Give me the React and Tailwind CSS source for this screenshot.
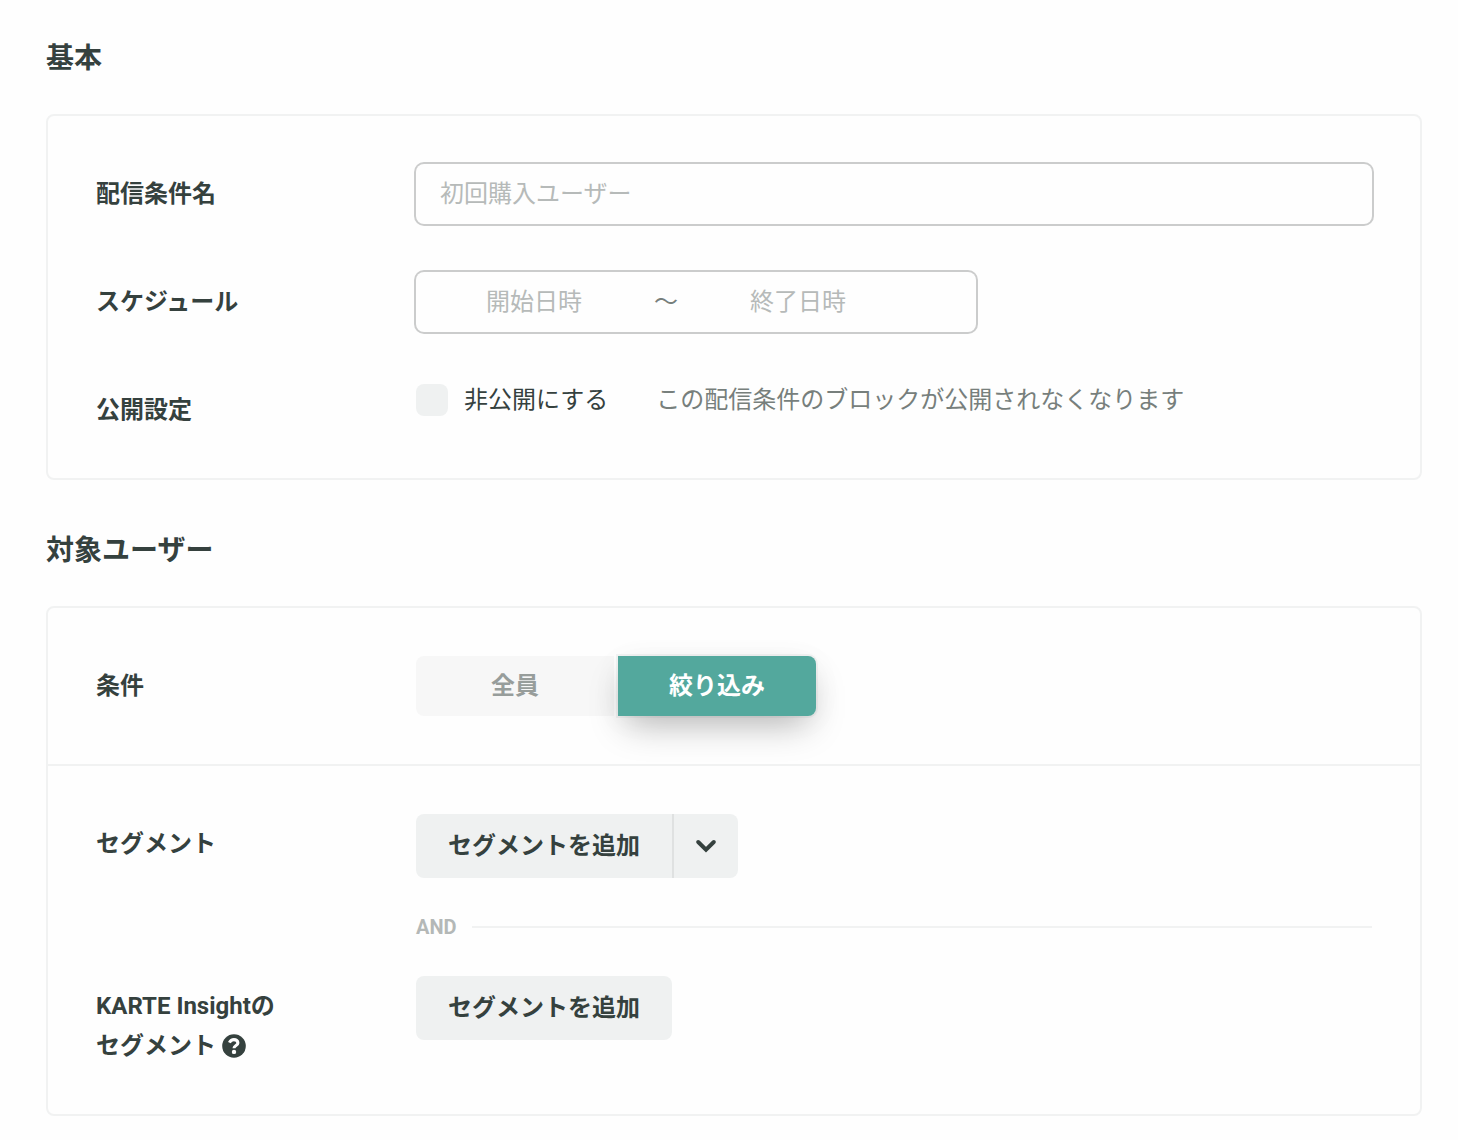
import { useState } from 'react';

const SectionTitle = ({ children }) => (
  <h2 className="mb-8 text-[28px] leading-[46px] font-bold">{children}</h2>
);

const Row = ({ label, htmlFor, children }) => (
  <div className="flex items-start">
    {htmlFor ? (
      <label htmlFor={htmlFor} className="w-80 shrink-0 py-2.5 leading-10 font-bold">
        {label}
      </label>
    ) : (
      <div className="w-80 shrink-0 py-2.5 leading-10 font-bold">{label}</div>
    )}
    <div className="min-w-0 flex-1">{children}</div>
  </div>
);

const AddSegmentButton = ({ className = '' }) => (
  <button type="button" className={`h-16 bg-[#eff1f1] px-8 font-bold ${className}`}>
    セグメントを追加
  </button>
);

const ChevronDown = () => (
  <svg width="24" height="24" viewBox="0 0 24 24" fill="none" aria-hidden="true">
    <path d="M4.2 8L12 15.6L19.8 8" stroke="currentColor" strokeWidth="4" strokeLinecap="round" />
  </svg>
);

const HelpIcon = () => (
  <svg width="24" height="24" viewBox="0 0 24 24" fill="none" aria-hidden="true">
    <circle cx="12" cy="12" r="11.8" fill="currentColor" />
    <path
      d="M7.4 8.6C8.4 6.6 9.9 5.6 11.9 5.6C14.2 5.6 15.9 7 15.9 9C15.9 11.6 12 11.4 12 14.2"
      stroke="#fefefe"
      strokeWidth="3.1"
    />
    <circle cx="12" cy="17.9" r="2.2" fill="#fefefe" />
  </svg>
);

const TargetToggle = ({ value, onChange }) => {
  const active =
    'relative bg-[#53a89d] text-white shadow-[0_0_0_2px_rgba(40,60,55,0.05),0_16px_36px_-8px_rgba(0,0,0,0.28),0_4px_32px_rgba(0,0,0,0.04)]';
  const inactive = 'bg-[#f7f7f7] text-[#979d9b]';

  return (
    <div className="flex gap-1">
      <button
        type="button"
        aria-pressed={value === 'all'}
        onClick={() => onChange('all')}
        className={`h-[60px] w-[198px] rounded-l-lg font-bold ${value === 'all' ? active : inactive}`}
      >
        全員
      </button>
      <button
        type="button"
        aria-pressed={value === 'filter'}
        onClick={() => onChange('filter')}
        className={`h-[60px] w-[198px] rounded-r-lg font-bold ${value === 'filter' ? active : inactive}`}
      >
        絞り込み
      </button>
    </div>
  );
};

const App = () => {
  const [target, setTarget] = useState('filter');
  const [isPrivate, setIsPrivate] = useState(false);

  return (
    <main
      lang="ja"
      className="min-h-screen bg-[#fefefe] pt-9 pr-9 pb-6 pl-[46px] font-['Roboto','Noto_Sans_CJK_JP',sans-serif] text-2xl text-[#35413e]"
    >
      {/* 基本 */}
      <section>
        <SectionTitle>基本</SectionTitle>
        <div className="flex flex-col gap-12 rounded-lg border-2 border-[#f1f2f2] px-12 pt-12 pb-[38px]">
          <Row label="配信条件名" htmlFor="name">
            <input
              id="name"
              type="text"
              placeholder="初回購入ユーザー"
              className="block h-[60px] w-full rounded-lg px-6 ring-2 ring-[#cbcccc] outline-none placeholder:text-[#b6bab9]"
            />
          </Row>

          <Row label="スケジュール" htmlFor="start">
            <div className="flex h-[60px] w-[560px] items-center rounded-lg ring-2 ring-[#cbcccc]">
              <input
                id="start"
                type="text"
                placeholder="開始日時"
                className="h-full w-[236px] text-center outline-none placeholder:text-[#b6bab9]"
              />
              <span className="w-7 text-center text-[#777f7c]">〜</span>
              <input
                type="text"
                aria-label="終了日時"
                placeholder="終了日時"
                className="h-full w-[236px] text-center outline-none placeholder:text-[#b6bab9]"
              />
            </div>
          </Row>

          <Row label="公開設定">
            <div className="flex h-10 items-center gap-12">
              <label className="flex items-center gap-4">
                <input
                  type="checkbox"
                  checked={isPrivate}
                  onChange={(e) => setIsPrivate(e.target.checked)}
                  className="size-8 appearance-none rounded-lg bg-[#eff1f1] checked:bg-[#53a89d]"
                />
                非公開にする
              </label>
              <span className="text-[#777f7c]">この配信条件のブロックが公開されなくなります</span>
            </div>
          </Row>
        </div>
      </section>

      {/* 対象ユーザー */}
      <section className="mt-12">
        <SectionTitle>対象ユーザー</SectionTitle>
        <div className="rounded-lg border-2 border-[#f1f2f2]">
          <div className="border-b-2 border-[#f1f2f2] p-12">
            <Row label="条件">
              <TargetToggle value={target} onChange={setTarget} />
            </Row>
          </div>

          <div className="px-12 pt-12 pb-[38px]">
            <Row label="セグメント">
              <div className="flex">
                <AddSegmentButton className="rounded-l-lg" />
                <button
                  type="button"
                  aria-label="メニューを開く"
                  className="flex h-16 w-[66px] items-center justify-center rounded-r-lg border-l-2 border-[#dfe1e1] bg-[#eff1f1]"
                >
                  <ChevronDown />
                </button>
              </div>
              <div className="flex h-[98px] items-center gap-4">
                <span className="w-10 text-xl font-bold text-[#b4b8b7]">AND</span>
                <div className="h-0.5 flex-1 bg-[#f1f2f2]" />
              </div>
            </Row>

            <Row
              label={
                <>
                  KARTE Insightの
                  <span className="flex items-center gap-1.5">
                    セグメント
                    <HelpIcon />
                  </span>
                </>
              }
            >
              <AddSegmentButton className="rounded-lg" />
            </Row>
          </div>
        </div>
      </section>
    </main>
  );
};

export default App;
